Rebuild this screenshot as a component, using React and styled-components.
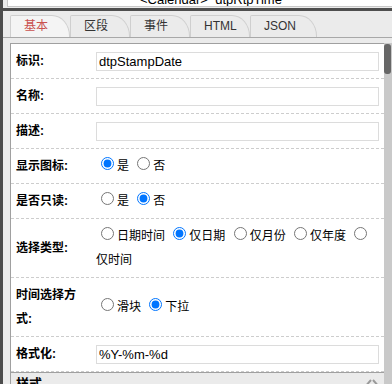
import { Fragment } from 'react';
import styled, { createGlobalStyle } from 'styled-components';

const GlobalStyle = createGlobalStyle`
  html, body {
    margin: 0;
    padding: 0;
    background: #ebebeb;
  }
  body {
    font-family: "Liberation Sans", "Noto Sans CJK SC", sans-serif;
  }
`;

const tabs = [
  { label: '基本', w: 60, active: true },
  { label: '区段', w: 60 },
  { label: '事件', w: 60 },
  { label: 'HTML', w: 60 },
  { label: 'JSON', w: 67 },
];

const typeOptions = [
  { label: '日期时间' },
  { label: '仅日期', checked: true },
  { label: '仅月份' },
  { label: '仅年度' },
  { label: '仅时间' },
];

const Options = ({ name, items }) => (
  <>
    {items.map((o) => (
      <Fragment key={o.label}>
        <Radio name={name} defaultChecked={!!o.checked} />
        {o.label}{' '}
      </Fragment>
    ))}
  </>
);

const App = () => {
  return (
    <>
      <GlobalStyle />
      <Frame>
        <LeftEdge />
        <Main>
          <TitleStrip>
            <TitleText>&lt;Calendar&gt;_dtpRtpTime</TitleText>
          </TitleStrip>
          <DarkBar />
          <TabBar>
            {tabs.map((t) => (
              <Tab key={t.label} $w={t.w} $active={t.active}>{t.label}</Tab>
            ))}
          </TabBar>
          <Body>
            <Panel>
              <Form>
                <Row>
                  <Label>标识:</Label>
                  <Value><TextInput defaultValue="dtpStampDate" /></Value>
                </Row>
                <Row>
                  <Label>名称:</Label>
                  <Value><TextInput defaultValue="" /></Value>
                </Row>
                <Row>
                  <Label>描述:</Label>
                  <Value><TextInput defaultValue="" /></Value>
                </Row>
                <Row>
                  <Label>显示图标:</Label>
                  <Value>
                    <Options name="icon" items={[{ label: '是', checked: true }, { label: '否' }]} />
                  </Value>
                </Row>
                <Row>
                  <Label>是否只读:</Label>
                  <Value>
                    <Options name="readonly" items={[{ label: '是' }, { label: '否', checked: true }]} />
                  </Value>
                </Row>
                <Row>
                  <Label>选择类型:</Label>
                  <Value>
                    <Options name="type" items={typeOptions} />
                  </Value>
                </Row>
                <Row>
                  <Label>时间选择方式:</Label>
                  <Value>
                    <Options name="mode" items={[{ label: '滑块' }, { label: '下拉', checked: true }]} />
                  </Value>
                </Row>
                <Row>
                  <Label>格式化:</Label>
                  <Value><TextInput defaultValue="%Y-%m-%d" /></Value>
                </Row>
              </Form>
              <Footer>
                <FooterTitle>样式</FooterTitle>
                <svg width="12" height="10" viewBox="0 0 12 10">
                  <path d="M5 1 L1.5 5 L5 9" fill="none" stroke="#9a9a9a" strokeWidth="2" />
                  <path d="M7 1 L10.5 5 L7 9" fill="none" stroke="#9a9a9a" strokeWidth="2" />
                </svg>
              </Footer>
            </Panel>
            <ScrollTrack>
              <ScrollThumb />
            </ScrollTrack>
          </Body>
        </Main>
      </Frame>
    </>
  );
};

const Frame = styled.div`
  display: flex;
  width: 392px;
  height: 384px;
  overflow: hidden;
`;

const LeftEdge = styled.div`
  width: 3px;
  flex-shrink: 0;
  background: #4c4c4c;
`;

const Main = styled.div`
  flex: 1;
  min-width: 0;
  display: flex;
  flex-direction: column;
  background: #ebebeb;
`;

const TitleStrip = styled.div`
  height: 6px;
  margin-left: 4px;
  padding-left: 132px;
  background: #fff;
  border-left: 1px solid #c8c8c8;
  border-bottom: 1px solid #c8c8c8;
  overflow: hidden;
  font-size: 13px;
  line-height: 13px;
  color: #000;
`;

const TitleText = styled.div`
  margin-top: -7px;
  white-space: nowrap;
`;

const DarkBar = styled.div`
  height: 3px;
  margin-top: 1px;
  background: #4e4e4e;
`;

const TabBar = styled.div`
  display: flex;
  align-items: flex-end;
  height: 26px;
  padding-left: 7px;
  border-bottom: 1px solid #a8a8a8;
`;

const Tab = styled.div`
  box-sizing: border-box;
  width: ${(p) => p.$w}px;
  height: 22px;
  padding-left: 13px;
  border: 1px solid #cfcfcf;
  border-bottom: none;
  border-radius: 2px 18px 0 0 / 2px 21px 0 0;
  background: ${(p) => (p.$active ? '#f4f4f4' : '#ebebeb')};
  color: ${(p) => (p.$active ? '#c9514e' : '#333')};
  font-size: 12px;
  line-height: 21px;
  white-space: nowrap;
`;

const Body = styled.div`
  flex: 1;
  min-height: 0;
  display: flex;
  margin-top: 5px;
  padding-left: 7px;
`;

const Panel = styled.div`
  flex: 1;
  min-width: 0;
  display: flex;
  flex-direction: column;
  background: #fff;
  border-left: 1px solid #a0a0a0;
  border-top: 1px solid #a0a0a0;
`;

const Form = styled.div`
  flex: 1;
`;

const Row = styled.div`
  display: grid;
  grid-template-columns: 80px 1fr;
  padding: 5px 0;
  border-bottom: 1px dashed #cdcdcd;
`;

const Label = styled.div`
  align-self: center;
  padding: 0 5px;
  font-size: 12px;
  line-height: 24px;
  font-weight: bold;
  color: #000;
`;

const Value = styled.div`
  align-self: center;
  padding: 0 5px;
  font-size: 12px;
  line-height: 24px;
  color: #000;
`;

const TextInput = styled.input`
  display: block;
  box-sizing: border-box;
  width: 100%;
  height: 19px;
  margin: 3px 0 2px;
  padding: 0 2px;
  border: 1px solid #dcdcdc;
  outline: none;
  font-family: "Liberation Sans", sans-serif;
  font-size: 13px;
  color: #000;
`;

const Radio = styled.input.attrs({ type: 'radio' })`
  width: 13px;
  height: 13px;
  margin: 3px 3px 0 5px;
`;

const Footer = styled.div`
  height: 11px;
  display: flex;
  justify-content: space-between;
  align-items: flex-start;
  padding: 3px 6px 0 5px;
  background: #ebebeb;
  border-top: 1px solid #a0a0a0;
  overflow: hidden;

  svg {
    margin-top: 3px;
  }
`;

const FooterTitle = styled.div`
  font-size: 13px;
  line-height: 16px;
  font-weight: bold;
  color: #000;
`;

const ScrollTrack = styled.div`
  width: 8px;
  flex-shrink: 0;
  background: #c9c9c9;
`;

const ScrollThumb = styled.div`
  width: 7px;
  height: 30px;
  margin-top: 1px;
  border-radius: 3px;
  background: #676767;
`;

export default App;
